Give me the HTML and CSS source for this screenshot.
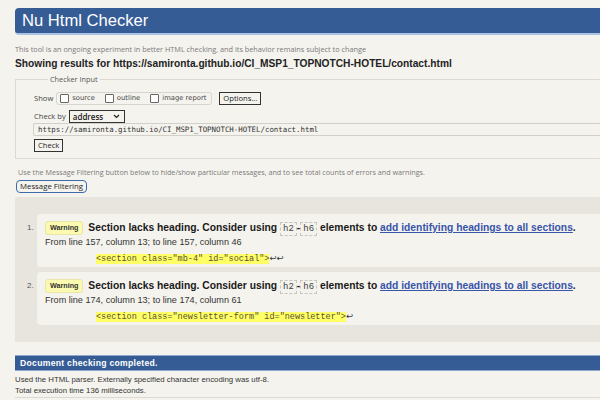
FILE: index.html
```html
<!DOCTYPE html>
<html>
<head>
<meta charset="utf-8">
<link rel="stylesheet" href="styles.css">
</head>
<body>
<div class="page">
  <h1 class="banner">Nu Html Checker</h1>
  <p class="intro">This tool is an ongoing experiment in better HTML checking, and its behavior remains subject to change</p>
  <p class="showing">Showing results for https://samironta.github.io/CI_MSP1_TOPNOTCH-HOTEL/contact.html</p>
  <fieldset class="checker">
    <legend>Checker Input</legend>
    <div class="row show-row">
      <span class="lbl">Show</span>
      <span class="group">
        <span class="cb"><i class="box"></i>source</span>
        <span class="cb"><i class="box"></i>outline</span>
        <span class="cb"><i class="box"></i>image report</span>
      </span>
      <span class="btn">Options...</span>
    </div>
    <div class="row checkby-row">
      <span class="lbl">Check by</span>
      <span class="select">address<svg width="7" height="5" viewBox="0 0 7 5"><path d="M1 1 L3.5 3.5 L6 1" fill="none" stroke="#222" stroke-width="1.2"/></svg></span>
    </div>
    <div class="url">https://samironta.github.io/CI_MSP1_TOPNOTCH-HOTEL/contact.html</div>
    <div class="row"><span class="btn check">Check</span></div>
  </fieldset>
  <p class="filter-note">Use the Message Filtering button below to hide/show particular messages, and to see total counts of errors and warnings.</p>
  <div class="filter-btn">Message Filtering</div>
  <ol class="results">
    <li class="msg">
      <span class="num">1.</span>
      <div class="card">
        <p class="title"><span class="badge">Warning</span> Section lacks heading. Consider using <code class="tag">h2</code>-<code class="tag">h6</code> elements to <a href="#">add identifying headings to all sections</a>.</p>
        <p class="loc">From line 157, column 13; to line 157, column 46</p>
        <p class="extract"><code><mark>&lt;section class="mb-4" id="social"&gt;</mark><span class="lf">↩↩</span></code></p>
      </div>
    </li>
    <li class="msg">
      <span class="num">2.</span>
      <div class="card">
        <p class="title"><span class="badge">Warning</span> Section lacks heading. Consider using <code class="tag">h2</code>-<code class="tag">h6</code> elements to <a href="#">add identifying headings to all sections</a>.</p>
        <p class="loc">From line 174, column 13; to line 174, column 61</p>
        <p class="extract"><code><mark>&lt;section class="newsletter-form" id="newsletter"&gt;</mark><span class="lf">↩</span></code></p>
      </div>
    </li>
  </ol>
  <p class="done">Document checking completed.</p>
  <p class="details">Used the HTML parser. Externally specified character encoding was utf-8.</p>
  <p class="details">Total execution time 136 milliseconds.</p>
</div>
</body>
</html>
```

FILE: styles.css
```css
html, body {
  margin: 0;
  padding: 0;
  background: #f5f3ee;
  overflow: hidden;
}
.page {
  width: 620px;
  padding: 8px 0 0 15px;
  font-family: "Open Sans", sans-serif;
  color: #333;
}
p { margin: 0; }
.banner {
  margin: 0;
  height: 25px;
  background: #365c96;
  border-bottom: 2px solid #aac3e3;
  border-radius: 4px 0 0 4px;
  color: #fff;
  font-family: "Liberation Sans", Arial, sans-serif;
  font-weight: normal;
  font-size: 16.6px;
  line-height: 25px;
  padding-left: 7px;
}
.intro {
  margin-top: 9px;
  font-size: 7.3px;
  color: #7a7a7a;
  line-height: 10px;
}
.showing {
  margin-top: 4px;
  font-family: "Liberation Sans", Arial, sans-serif;
  font-weight: bold;
  font-size: 10.2px;
  color: #222;
  line-height: 12px;
}
.checker {
  margin: 5px 0 0 0;
  padding: 2px 0 8px 18px;
  border: 1px solid #dcd9d3;
  border-right: none;
  font-size: 7.6px;
  color: #444;
}
.checker legend {
  padding: 0 2px;
  margin-left: 14px;
  font-size: 7.3px;
  color: #555;
  line-height: 9px;
}
.row {
  display: flex;
  align-items: center;
  height: 14px;
}
.show-row { margin-top: 5px; }
.checkby-row { margin-top: 4px; }
.lbl { margin-right: 3px; }
.group {
  display: flex;
  align-items: center;
  gap: 10px;
  border: 1px solid #d8d5cf;
  border-radius: 3px;
  padding: 1px 5px 1px 3px;
  height: 9px;
}
.cb { display: flex; align-items: center; font-family: "DejaVu Sans", sans-serif; font-size: 6.8px; color: #444; }
.box {
  display: inline-block;
  width: 7px; height: 7px;
  border: 1px solid #666;
  border-radius: 1px;
  background: #fff;
  margin-right: 3px;
}
.btn {
  display: inline-block;
  border: 1px solid #333;
  padding: 0 3px;
  height: 11px;
  line-height: 11px;
  font-size: 7.6px;
  color: #222;
  margin-left: 7px;
  background: #f5f3ee;
}
.check { margin-left: 0; margin-top: 4px; }
.select {
  display: inline-flex;
  align-items: center;
  justify-content: space-between;
  width: 47px;
  height: 11px;
  border: 1px solid #333;
  padding: 0 4px 0 3px;
  font-size: 8px;
  color: #222;
  font-weight: 600;
}
.url {
  margin: 0 0 0 -1px;
  height: 11px;
  border: 1px solid #d3d0ca;
  border-right: none;
  border-radius: 2px 0 0 2px;
  padding-left: 4px;
  font-family: "DejaVu Sans Mono", monospace;
  font-size: 7.4px;
  line-height: 11px;
  color: #333;
}
.filter-note {
  margin-top: 8px;
  padding-left: 3px;
  font-size: 7.2px;
  color: #7a7a7a;
  line-height: 10px;
}
.filter-btn {
  width: fit-content;
  margin: 3px 0 0 1px;
  border: 1px solid #3d6aa8;
  border-radius: 4px;
  padding: 0 3px;
  font-size: 7.8px;
  line-height: 11px;
  color: #222;
}
.results {
  list-style: none;
  margin: 4px 0 0 0;
  padding: 17px 0 17px 12px;
  background: #e8e5df;
  display: flex;
  flex-direction: column;
  gap: 5px;
  font-family: "Liberation Sans", Arial, sans-serif;
}
.msg { display: flex; }
.num {
  width: 10px;
  font-size: 8px;
  color: #555;
  padding-top: 9px;
}
.card {
  flex: 1;
  background: #f5f3ee;
  border-radius: 4px 0 0 4px;
  padding: 6px 0 4px 8px;
  height: 43px;
}
.title {
  font-weight: bold;
  font-size: 10.3px;
  color: #1a1a1a;
  line-height: 15px;
  white-space: nowrap;
}
.badge {
  display: inline-block;
  background: #fbfab0;
  border: 1px solid #e8e6a8;
  border-radius: 3px;
  padding: 0 4px;
  font-size: 7.2px;
  line-height: 12px;
  color: #333;
  margin-right: 2px;
  vertical-align: 1px;
}
.tag {
  display: inline-block;
  border: 1px dashed #c8c5bf;
  padding: 0 2px;
  font-family: "Liberation Mono", monospace;
  font-weight: normal;
  font-size: 9px;
  line-height: 12px;
  color: #444;
  margin: 0;
}
.title a { color: #3855aa; }
.loc {
  margin-top: 1px;
  font-size: 9.1px;
  color: #333;
  line-height: 11px;
}
.extract {
  margin-top: 2px;
  padding-left: 51px;
  line-height: 11px;
}
.extract code {
  font-family: "Liberation Mono", monospace;
  font-size: 8.5px;
  color: #5a5030;
}
.extract mark { background: #ffff66; color: #5a5030; }
.lf { font-family: "DejaVu Sans", sans-serif; font-size: 8.5px; color: #333; }
.done {
  margin-top: 13px;
  background: #365c96;
  border-top: 1px solid #8fa8cc;
  border-bottom: 1px solid #8fa8cc;
  color: #fff;
  font-family: "Liberation Sans", Arial, sans-serif;
  font-weight: bold;
  font-size: 8.6px;
  letter-spacing: 0.3px;
  line-height: 14px;
  padding-left: 5px;
}
.details {
  font-family: "Liberation Sans", Arial, sans-serif;
  font-size: 7.8px;
  color: #333;
  line-height: 11px;
}
.done + .details { margin-top: 3px; }
.details + .details { border-bottom: 1px solid #dcd9d3; padding-bottom: 1px; }
```
